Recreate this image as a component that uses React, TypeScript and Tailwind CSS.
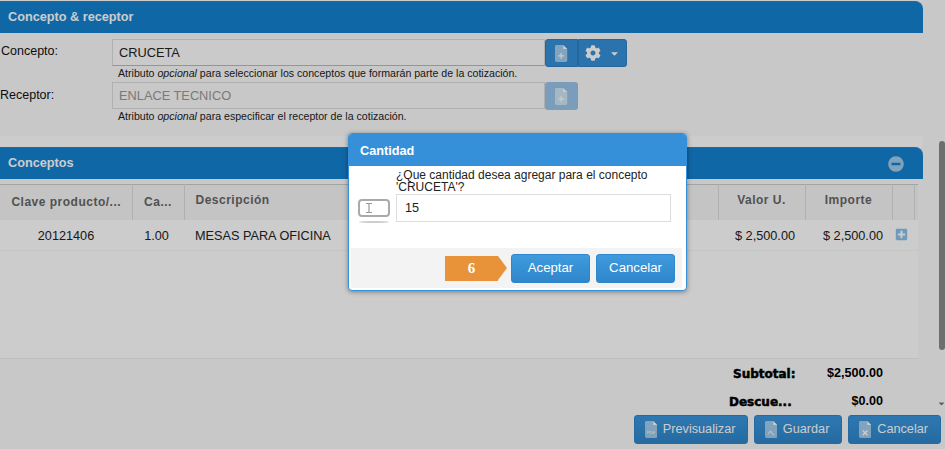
import { FaCaretDown, FaCog, FaMinusCircle, FaPlusSquare } from "react-icons/fa";

function FileIcon({ mark, size = 18 }: { mark: "plus" | "pdf" | "save" | "x"; size?: number }) {
  return (
    <svg width={size * 0.72} height={size} viewBox="0 0 13 18" className="shrink-0">
      <path d="M1.5 0H8.5L13 4.5V16.5A1.5 1.5 0 0 1 11.5 18H1.5A1.5 1.5 0 0 1 0 16.5V1.5A1.5 1.5 0 0 1 1.5 0Z" fill="#fff" fillOpacity="0.55" />
      <path d="M8.8 0L13 4.2H8.8Z" fill="#fff" />
      {mark === "plus" && <path d="M6.5 8.5V14.5M3.5 11.5H9.5" stroke="#fff" strokeWidth="1.3" />}
      {mark === "x" && <path d="M4 10L9 15M9 10L4 15" stroke="#fff" strokeWidth="1.5" />}
      {mark === "save" && <path d="M3 14L6 10.5L7.5 13.5L10 14.5" stroke="#fff" strokeWidth="1" fill="none" />}
      {mark === "pdf" && (
        <text x="6.5" y="13.5" textAnchor="middle" fontSize="4.6" fill="#fff" fontFamily="Liberation Sans, sans-serif">
          PDF
        </text>
      )}
    </svg>
  );
}

function PanelHeader({ title, collapse }: { title: string; collapse?: boolean }) {
  return (
    <div className="flex h-8 items-center justify-between rounded-tr-lg border-t border-[#1a88d8] bg-[#1581d0] pr-[19px] pl-[8px] text-[12.7px] font-bold text-white">
      <span className="pt-[1px]">{title}</span>
      {collapse && <FaMinusCircle className="text-[16px] text-white/60" />}
    </div>
  );
}

function FooterButton({ label, mark, width }: { label: string; mark: "pdf" | "save" | "x"; width: string }) {
  return (
    <button
      type="button"
      className={`flex h-[29px] items-center justify-center gap-[6px] rounded-[3px] border border-[#2f86cb] bg-gradient-to-b from-[#3a96dd] to-[#2f86cb] pr-[2px] text-[12.7px] text-white ${width}`}
    >
      <FileIcon mark={mark} size={17} />
      {label}
    </button>
  );
}

function ModalButton({ label }: { label: string }) {
  return (
    <button
      type="button"
      className="h-[29px] w-[79px] rounded-[3px] border border-[#2f86cb] bg-gradient-to-b from-[#3f9ade] to-[#2f86cb] text-[13.2px] text-white"
    >
      {label}
    </button>
  );
}

export default function App() {
  return (
    <div className="relative flex h-[449px] w-[945px] flex-col overflow-hidden bg-white font-['Liberation_Sans',sans-serif] text-black">
      <div className="flex min-h-0 flex-1">
        <div className="w-[923px] shrink-0 overflow-hidden">
          <section className="mt-[1px] h-[135px] rounded-b bg-[#fafafa]">
            <PanelHeader title="Concepto & receptor" />
            <div className="flex pt-[6px] pl-[1px]">
              <label className="w-[111px] pt-[3px] text-[12.5px] text-[#111]">Concepto:</label>
              <div>
                <div className="flex">
                  <div className="flex h-[27px] w-[433px] items-center border border-b-[#bbb] border-[#ddd] bg-[#fdfdfd] pl-[6px] text-[12.8px] text-[#222]">
                    CRUCETA
                  </div>
                  <div className="flex h-[28px] w-[33px] items-center justify-center rounded-l-[3px] border border-[#2f80c4] bg-[#3590d9]">
                    <FileIcon mark="plus" size={17} />
                  </div>
                  <div className="flex h-[28px] w-[49px] items-center justify-center gap-[8px] rounded-r-[3px] border border-[#2f80c4] bg-[#3590d9] text-white">
                    <FaCog className="text-[16px]" />
                    <FaCaretDown className="text-[11px]" />
                  </div>
                </div>
                <p className="mt-[-1px] pl-[6px] text-[10.6px] leading-[14px] text-[#222]">
                  Atributo <em>opcional</em> para seleccionar los conceptos que formarán parte de la cotización.
                </p>
              </div>
            </div>
            <div className="mt-[2px] flex">
              <label className="w-[112px] pt-[4px] text-[12.5px] text-[#111]">Receptor:</label>
              <div>
                <div className="flex">
                  <div className="flex h-[27px] w-[433px] items-center border border-[#ddd] bg-[#fafafa] pt-[1px] pl-[6px] text-[12.8px] text-[#999]">
                    ENLACE TECNICO
                  </div>
                  <div className="flex h-[28px] w-[33px] items-center justify-center rounded-[3px] bg-[#3590d9]/50">
                    <FileIcon mark="plus" size={17} />
                  </div>
                </div>
                <p className="mt-[-1px] pl-[6px] text-[10.6px] leading-[14px] text-[#222]">
                  Atributo <em>opcional</em> para especificar el receptor de la cotización.
                </p>
              </div>
            </div>
          </section>

          <section className="mt-[11px] bg-[#fafafa]">
            <PanelHeader title="Conceptos" collapse />
            <div className="w-[918px] pt-[5px]">
              <table className="w-full table-fixed border-t border-[#ccc] text-[12.7px]">
                <colgroup>
                  <col className="w-[132px]" />
                  <col className="w-[52px]" />
                  <col className="w-[534px]" />
                  <col className="w-[87px]" />
                  <col className="w-[87px]" />
                  <col className="w-[22px]" />
                  <col className="w-[4px]" />
                </colgroup>
                <thead>
                  <tr className="h-[35px] bg-[#f6f6f6] text-[12px] tracking-[0.5px] text-[#666]">
                    <th className="border-r border-[#ddd] pb-[1px] pl-[1px] text-center font-bold">Clave producto/...</th>
                    <th className="border-r border-[#ddd] pb-[1px] text-center font-bold">Ca...</th>
                    <th className="border-r border-[#ddd] pb-[4px] pl-[11px] text-left font-bold">Descripción</th>
                    <th className="border-r border-[#ddd] pb-[5px] text-center font-bold">Valor U.</th>
                    <th className="border-r border-[#ddd] pb-[5px] text-center font-bold">Importe</th>
                    <th className="border-r border-[#ddd]" />
                    <th />
                  </tr>
                </thead>
                <tbody>
                  <tr className="h-[31px] border-b border-[#f7f7f7] bg-[#ffffff] text-[#222]">
                    <td className="pt-[4px] text-center">20121406</td>
                    <td className="pt-[4px] pr-[3px] text-center">1.00</td>
                    <td className="pt-[4px] pl-[11px]">MESAS PARA OFICINA</td>
                    <td className="pt-[4px] pr-[10px] text-right">$ 2,500.00</td>
                    <td className="pt-[4px] pr-[9px] text-right">$ 2,500.00</td>
                    <td className="pr-[3px] text-center">
                      <FaPlusSquare className="inline-block text-[13px] text-[#3f97dc]/60" />
                    </td>
                    <td />
                  </tr>
                </tbody>
              </table>
              <div className="h-[108px] border-b border-[#eee] bg-white" />
            </div>
            <div className="flex w-[883px] flex-col items-end gap-[15px] pt-[8px] font-['DejaVu_Sans',sans-serif] text-[12px] font-bold">
              <div className="flex h-[13px] items-center">
                <span className="w-[87px] [-webkit-text-stroke:0.5px_#000]">Subtotal:</span>
                <span className="w-[63px] text-right font-['Liberation_Sans',sans-serif] text-[12.6px]">$2,500.00</span>
              </div>
              <div className="flex h-[13px] items-center">
                <span className="w-[91px] [-webkit-text-stroke:0.5px_#000]">Descue...</span>
                <span className="w-[63px] text-right font-['Liberation_Sans',sans-serif] text-[12.6px]">$0.00</span>
              </div>
            </div>
          </section>
        </div>

        <div className="flex flex-1 justify-end bg-[#fbfbfb] pt-[141px] pr-[0px]">
          <div className="flex h-[267px] w-[7px] flex-col items-center">
            <div className="h-[209px] w-[6px] rounded-full bg-[#8a8a8a]" />
            <FaCaretDown className="mt-auto text-[9px] text-[#777]" />
          </div>
        </div>
      </div>

      <div className="flex h-[41px] shrink-0 justify-end gap-[6px] bg-[#fafafa] pt-[7px] pr-[4px]">
        <FooterButton label="Previsualizar" mark="pdf" width="w-[114px]" />
        <FooterButton label="Guardar" mark="save" width="w-[88px]" />
        <FooterButton label="Cancelar" mark="x" width="w-[93px]" />
      </div>

      {/* backdrop */}
      <div className="absolute inset-0 bg-black/20" />

      <div className="absolute top-[133px] left-[348px] w-[339px] overflow-hidden rounded-[4px] border-[1.5px] border-[#3590d9] bg-white shadow-[0_1px_5px_rgba(0,0,0,0.4)]">
        <div className="flex h-[32px] items-center bg-[#3590d9] pt-[3px] pl-[11px] text-[12.7px] font-bold text-white">Cantidad</div>
        <div className="flex h-[82px]">
          <div className="flex w-[47px] flex-col items-center pt-[33px] pl-[3px]">
            <svg width="34" height="26" viewBox="0 0 34 26">
              <rect x="2" y="1" width="30" height="16" rx="3" fill="#fff" stroke="#aaa" strokeWidth="2" />
              <path d="M9 4.5H15M12 4.5V13.5M9 13.5H15" stroke="#999" strokeWidth="1.2" fill="none" />
              <ellipse cx="17" cy="23" rx="15" ry="1" fill="#ccc" />
            </svg>
          </div>
          <div className="pt-[3px]">
            <p className="w-[280px] text-[12px] leading-[12px] text-[#222]">
              ¿Que cantidad desea agregar para el concepto 'CRUCETA'?
            </p>
            <div className="mt-[1px] flex h-[28px] w-[275px] items-center border border-[#ddd] bg-white pt-[1px] pl-[8px] text-[12.7px] text-[#222]">
              15
            </div>
          </div>
        </div>
        <div className="mr-[4px] ml-[2px] flex h-[40px] items-center justify-end gap-[6px] bg-[#f3f3f3] pr-[7px]">
          <div className="mr-[-2px] flex h-[25px] items-center">
            <span className="flex h-[25px] w-[53px] items-center justify-center bg-[#e8933a] font-['Liberation_Serif',serif] text-[15px] font-bold text-white">6</span>
            <span className="border-y-[12.5px] border-l-[9px] border-y-transparent border-l-[#e8933a]" />
          </div>
          <ModalButton label="Aceptar" />
          <ModalButton label="Cancelar" />
        </div>
        <div className="h-[2px]" />
      </div>
    </div>
  );
}
